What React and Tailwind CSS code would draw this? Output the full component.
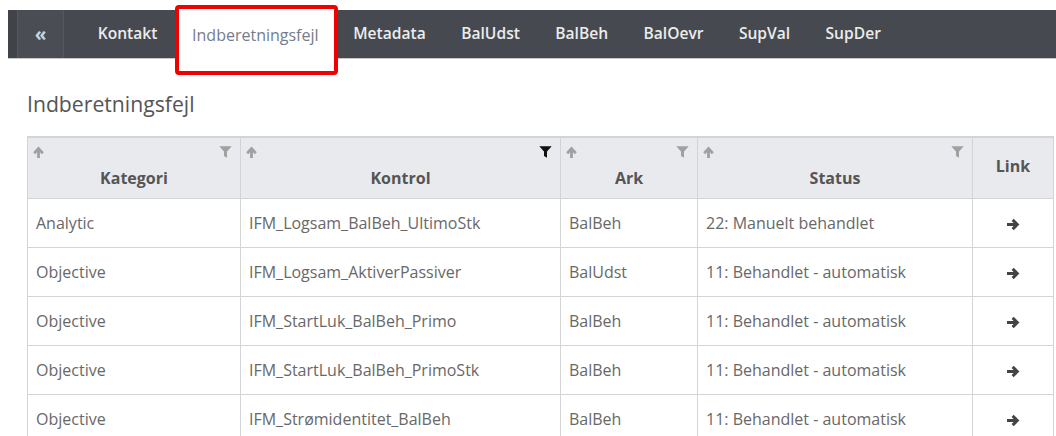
import React from "react";

const tabs = ["Kontakt", "Indberetningsfejl", "Metadata", "BalUdst", "BalBeh", "BalOevr", "SupVal", "SupDer"];

const rows = [
  ["Analytic", "IFM_Logsam_BalBeh_UltimoStk", "BalBeh", "22: Manuelt behandlet"],
  ["Objective", "IFM_Logsam_AktiverPassiver", "BalUdst", "11: Behandlet - automatisk"],
  ["Objective", "IFM_StartLuk_BalBeh_Primo", "BalBeh", "11: Behandlet - automatisk"],
  ["Objective", "IFM_StartLuk_BalBeh_PrimoStk", "BalBeh", "11: Behandlet - automatisk"],
  ["Objective", "IFM_Strømidentitet_BalBeh", "BalBeh", "11: Behandlet - automatisk"],
];

const columns = [
  { label: "Kategori", w: "w-[213px]", active: false },
  { label: "Kontrol", w: "w-[320px]", active: true },
  { label: "Ark", w: "w-[137px]", active: false },
  { label: "Status", w: "w-[275px]", active: false },
];

function SortUp() {
  return (
    <svg width="11" height="12" viewBox="0 0 11 12" className="block">
      <path d="M5.5 12V3M1.2 7.2L5.5 2.6L9.8 7.2" fill="none" stroke="#a0a0a0" strokeWidth="2.8" />
    </svg>
  );
}

function Funnel({ dark }) {
  return (
    <svg width="13" height="12" viewBox="0 0 13 12" className="block">
      <path d="M0.3 0.3H12.7L8 5.4V11.8L5 10V5.4Z" fill={dark ? "#111111" : "#a0a0a0"} />
    </svg>
  );
}

function ArrowRight() {
  return (
    <svg width="14" height="13" viewBox="0 0 14 13" className="inline-block">
      <path d="M1 6.5H11.2M6.6 1.9L11.3 6.5L6.6 11.1" fill="none" stroke="#444444" strokeWidth="3" />
    </svg>
  );
}

export default function App() {
  return (
    <div className="relative min-h-[436px] bg-white pt-[10px] font-['Open_Sans',sans-serif]">
      {/* top tab bar */}
      <div className="ml-[8px] flex h-[49px] bg-[#464a50] border-b border-[#c9c9c9]">
        <div className="w-[9px] bg-[#404449]" />
        <div className="flex w-[47px] items-center justify-center border-x border-[#54585e] bg-[#4a4e54] text-[19px] font-bold leading-none text-[#c9d2e0]">
          «
        </div>
        <div className="ml-[16px] flex">
          {tabs.map((t, i) =>
            i === 1 ? (
              <div key={t} className="flex h-[49px] items-center bg-white px-[17px] text-[16px] text-[#747c8c]">
                {t}
              </div>
            ) : (
              <div key={t} className="flex items-center px-[17.7px] text-[15.6px] font-semibold text-[#ececec]">
                {t}
              </div>
            )
          )}
        </div>
      </div>

      {/* highlight frame around the current tab */}
      <div className="pointer-events-none absolute left-[175px] top-[5px] h-[70px] w-[163px] rounded-[4px] border-[4px] border-[#f00000]" />

      <h1 className="ml-[27px] mt-[31px] text-[21.2px] font-normal leading-[28px] text-[#555555]">
        Indberetningsfejl
      </h1>

      <table className="ml-[27px] mt-[18px] border-collapse text-[16px]">
        <thead>
          <tr className="bg-[#e9eaed] border-t-[2px] border-[#d3d4d7]">
            {columns.map((c) => (
              <th key={c.label} className={`${c.w} h-[61px] border border-[#d3d4d7] px-[5px] pt-[8px] pb-[8px] align-top font-bold`}>
                <div className="flex h-[12px] items-start justify-between pr-[3px]">
                  <SortUp />
                  <Funnel dark={c.active} />
                </div>
                <div className="mt-[9px] text-center leading-[22px] text-[#555555]">{c.label}</div>
              </th>
            ))}
            <th className="w-[81px] border border-[#d3d4d7] pb-[3px] text-center align-middle font-bold text-[#555555]">
              Link
            </th>
          </tr>
        </thead>
        <tbody>
          {rows.map((r, i) => (
            <tr key={i} className="h-[49px] bg-white">
              {r.map((v, j) => (
                <td key={j} className="border border-[#d3d4d7] px-[8px] text-left text-[#686868]">
                  {v}
                </td>
              ))}
              <td className="border border-[#d3d4d7] text-center">
                <ArrowRight />
              </td>
            </tr>
          ))}
        </tbody>
      </table>
    </div>
  );
}
